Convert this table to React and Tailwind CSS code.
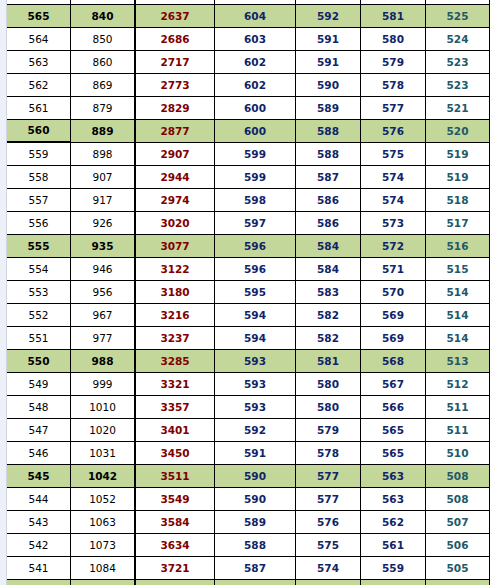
import React from "react";

const rows = [
  [565, 840, 2637, 604, 592, 581, 525],
  [564, 850, 2686, 603, 591, 580, 524],
  [563, 860, 2717, 602, 591, 579, 523],
  [562, 869, 2773, 602, 590, 578, 523],
  [561, 879, 2829, 600, 589, 577, 521],
  [560, 889, 2877, 600, 588, 576, 520],
  [559, 898, 2907, 599, 588, 575, 519],
  [558, 907, 2944, 599, 587, 574, 519],
  [557, 917, 2974, 598, 586, 574, 518],
  [556, 926, 3020, 597, 586, 573, 517],
  [555, 935, 3077, 596, 584, 572, 516],
  [554, 946, 3122, 596, 584, 571, 515],
  [553, 956, 3180, 595, 583, 570, 514],
  [552, 967, 3216, 594, 582, 569, 514],
  [551, 977, 3237, 594, 582, 569, 514],
  [550, 988, 3285, 593, 581, 568, 513],
  [549, 999, 3321, 593, 580, 567, 512],
  [548, 1010, 3357, 593, 580, 566, 511],
  [547, 1020, 3401, 592, 579, 565, 511],
  [546, 1031, 3450, 591, 578, 565, 510],
  [545, 1042, 3511, 590, 577, 563, 508],
  [544, 1052, 3549, 590, 577, 563, 508],
  [543, 1063, 3584, 589, 576, 562, 507],
  [542, 1073, 3634, 588, 575, 561, 506],
  [541, 1084, 3721, 587, 574, 559, 505],
];

const widths = ["w-[64px]", "w-[65px]", "w-[79px]", "w-[81px]", "w-[65px]", "w-[65px]", "w-[64px]"];
const borders = ["border-r", "border-r-2", "border-r", "border-r", "border-r", "border-r", "border-r"];
const colors = ["text-black", "text-black", "text-[#800000] font-bold", "text-[#0f2469] font-bold", "text-[#0f2469] font-bold", "text-[#0f2469] font-bold", "text-[#215967] font-bold"];

function Row({ cells, green, h, thickFirst }) {
  return (
    <div className={`flex shrink-0 ${h} ${green ? "bg-[#c4d79b]" : "bg-white"}`}>
      {widths.map((w, i) => (
        <div
          key={i}
          className={`${w} shrink-0 box-border border-black ${borders[i]} ${i === 0 && thickFirst ? "border-b-2" : "border-b"} flex items-center justify-center ${colors[i]} ${green && i < 2 ? "font-bold" : ""}`}
        >
          {cells ? cells[i] : ""}
        </div>
      ))}
    </div>
  );
}

export default function App() {
  return (
    <div className="w-[492px] h-[585px] overflow-hidden bg-white flex items-start" style={{ fontFamily: '"DejaVu Sans", Verdana, sans-serif' }}>
      <div className="w-[7px] h-full shrink-0 bg-[#eef0f7] border-r border-[#cfd5e3] box-border" />
      <div className="flex flex-col shrink-0 text-[10.5px] leading-none">
        <Row h="h-[5px]" />
        {rows.map((r, idx) => (
          <Row key={idx} cells={r} green={idx % 5 === 0} h="h-[23px]" thickFirst={idx === 5} />
        ))}
        <Row h="h-[23px]" green />
      </div>
    </div>
  );
}
